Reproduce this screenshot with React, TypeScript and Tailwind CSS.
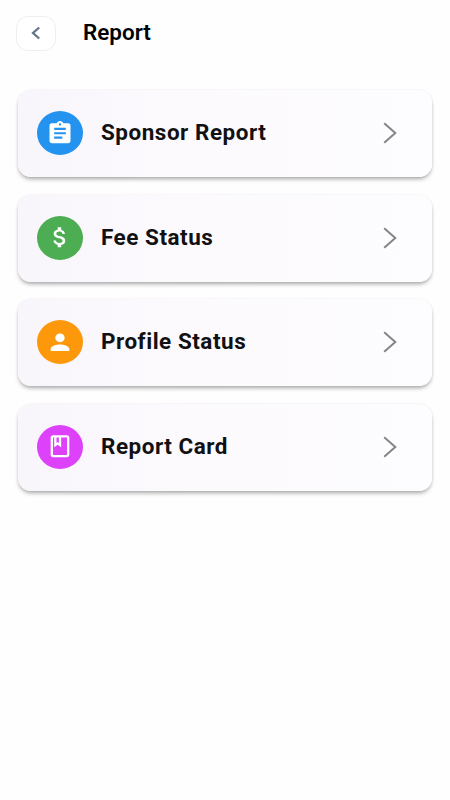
import React from "react";

type Item = { label: string; color: string; path: string };

const items: Item[] = [
  {
    label: "Sponsor Report",
    color: "bg-[#2493ef]",
    path: "M19 3h-4.18C14.4 1.84 13.3 1 12 1c-1.3 0-2.4.84-2.82 2H5c-1.1 0-2 .9-2 2v14c0 1.1.9 2 2 2h14c1.1 0 2-.9 2-2V5c0-1.1-.9-2-2-2zm-7 0c.55 0 1 .45 1 1s-.45 1-1 1-1-.45-1-1 .45-1 1-1zm2 14H7v-2h7v2zm3-4H7v-2h10v2zm0-4H7V7h10v2z",
  },
  {
    label: "Fee Status",
    color: "bg-[#4dad52]",
    path: "M11.8 10.9c-2.27-.59-3-1.2-3-2.15 0-1.09 1.01-1.85 2.7-1.85 1.78 0 2.44.85 2.5 2.1h2.21c-.07-1.72-1.12-3.3-3.21-3.81V3h-3v2.16c-1.94.42-3.5 1.68-3.5 3.61 0 2.31 1.91 3.46 4.7 4.13 2.5.6 3 1.48 3 2.41 0 .69-.49 1.79-2.7 1.79-2.06 0-2.87-.92-2.98-2.1h-2.2c.12 2.19 1.76 3.42 3.68 3.83V21h3v-2.15c1.95-.37 3.5-1.5 3.5-3.55 0-2.84-2.43-3.81-4.7-4.4z",
  },
  {
    label: "Profile Status",
    color: "bg-[#fd980b]",
    path: "M12 12c2.21 0 4-1.79 4-4s-1.79-4-4-4-4 1.79-4 4 1.79 4 4 4zm0 2c-2.67 0-8 1.34-8 4v2h16v-2c0-2.66-5.33-4-8-4z",
  },
  {
    label: "Report Card",
    color: "bg-[#de41fa]",
    path: "M18 2H6c-1.1 0-2 .9-2 2v16c0 1.1.9 2 2 2h12c1.1 0 2-.9 2-2V4c0-1.1-.9-2-2-2zM9 4h2v5l-1-.75L9 9V4zm9 16H6V4h1v9l3-2.25L13 13V4h5v16z",
  },
];

function ReportRow({ label, color, path }: Item) {
  return (
    <button className="flex h-[87px] w-full items-center rounded-[13px] bg-linear-to-r from-[#f8f6fb] via-[#fcfafd] via-40% to-[#fdfcfe] pr-[35px] pb-px pl-[18.5px] shadow-[0_3px_4px_-1px_rgba(0,0,0,0.34),0_0_2px_rgba(0,0,0,0.09)]">
      <span className={`flex h-11 w-[46px] shrink-0 items-center justify-center rounded-[50%] ${color}`}>
        <svg viewBox="0 0 24 24" preserveAspectRatio="none" className="h-[26.5px] w-7 fill-white">
          <path d={path} />
        </svg>
      </span>
      <span className="ml-[18.5px] grow origin-left scale-x-[1.045] text-left text-[21.5px] leading-7 font-bold tracking-[0.5px] text-[#111113]">
        {label}
      </span>
      <svg viewBox="0 0 14 22" className="h-[22px] w-3.5 fill-none stroke-[#858588] stroke-2">
        <path d="M1.2 1.2 12.3 11 1.2 20.8" />
      </svg>
    </button>
  );
}

export default function App() {
  return (
    <div className="min-h-screen bg-[#fefefe] px-[18px] pt-4 font-['Roboto',sans-serif]">
      <header className="-ml-0.5 flex h-[35px] items-center">
        <button className="flex h-[35px] w-10 items-center justify-center rounded-xl border border-[#eeeeef] bg-white">
          <svg viewBox="0 0 10 14" className="mb-px h-3.5 w-2.5 fill-none stroke-[#64748b] stroke-[2.3]">
            <path d="M8.2 1.5 2 7l6.2 5.5" />
          </svg>
        </button>
        <h1 className="mb-px ml-[26.5px] origin-left scale-x-[1.045] text-[21.5px] leading-7 font-semibold text-black">Report</h1>
      </header>
      <main className="mt-[39px] flex flex-col gap-[17.5px]">
        {items.map((item) => (
          <ReportRow key={item.label} {...item} />
        ))}
      </main>
    </div>
  );
}
